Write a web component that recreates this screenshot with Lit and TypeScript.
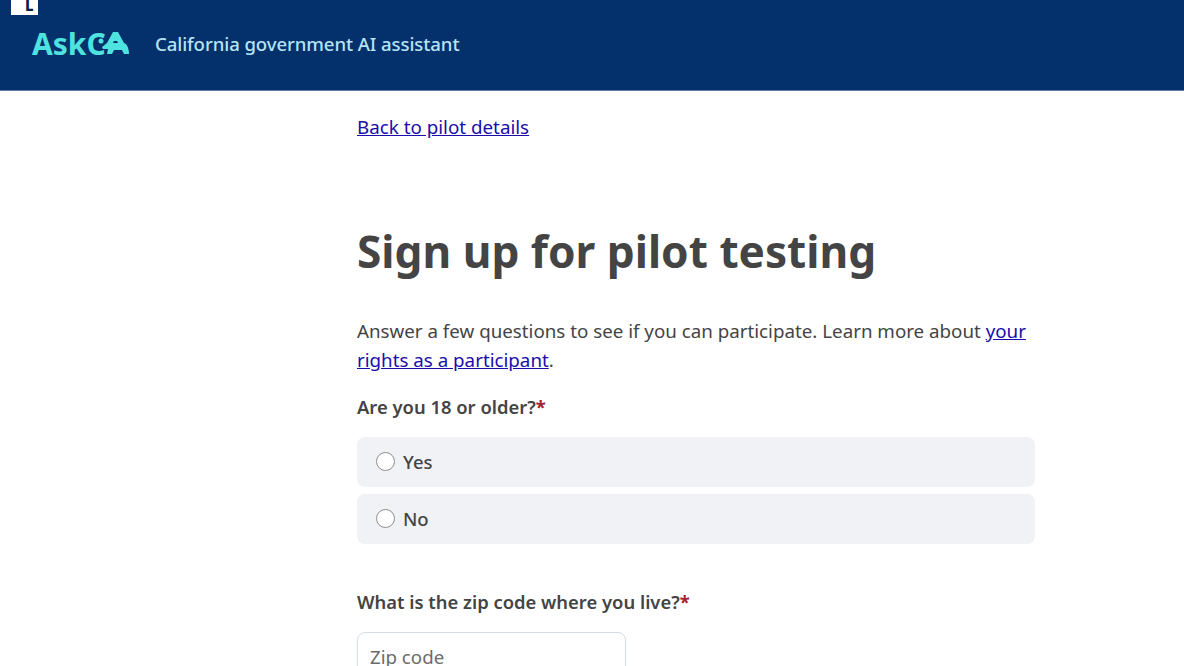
import { LitElement, html, css } from "lit";
import { customElement } from "lit/decorators.js";

@customElement("app-root")
export class AppRoot extends LitElement {
  static styles = css`
    :host {
      display: block;
      height: 666px;
      overflow: hidden;
      background: #fff;
      color: #444444;
      font-family: "Noto Sans", sans-serif;
      font-size: 18px;
    }

    header {
      position: relative;
      height: 91px;
      box-sizing: border-box;
      background: #04306b;
      border-bottom: 1px solid #5f7da6;
      display: flex;
      align-items: center;
      padding: 0 0 3px 32px;
    }

    .skip {
      position: absolute;
      top: 0;
      left: 11px;
      width: 27px;
      height: 15px;
      box-sizing: border-box;
      padding-left: 14px;
      background: #fff;
      color: #04204a;
      font-size: 15px;
      font-weight: 800;
      line-height: 10px;
    }

    .logo {
      display: flex;
      align-items: center;
      width: 97px;
      margin-right: 26px;
      color: #4fe3e0;
      font-size: 30px;
      font-weight: 700;
      line-height: 32px;
    }

    .logo svg {
      display: block;
      flex: none;
      margin-left: -4px;
      margin-top: -1px;
      overflow: visible;
    }

    .tagline {
      color: #b5e4f5;
      font-size: 18.6px;
      font-weight: 500;
      letter-spacing: -0.1px;
    }

    main {
      width: 678px;
      margin-left: 357px;
      padding-top: 22px;
    }

    a {
      color: #1a0dab;
      text-decoration: underline;
    }

    .back {
      display: block;
      font-size: 18.8px;
      line-height: 28px;
    }

    h1 {
      margin: 82px 0 0;
      font-size: 44.2px;
      font-weight: 700;
      line-height: 56px;
    }

    .intro {
      margin: 37px 0 0;
      font-size: 18.75px;
      line-height: 29px;
    }

    .label {
      font-size: 18.4px;
      font-weight: 600;
      line-height: 26px;
    }

    .label span {
      color: #a3222f;
      font-weight: 700;
    }

    .age {
      margin-top: 20px;
    }

    .options {
      display: flex;
      flex-direction: column;
      gap: 7px;
      margin-top: 17px;
    }

    .option {
      display: flex;
      align-items: center;
      gap: 8px;
      height: 50px;
      box-sizing: border-box;
      padding: 0 0 2px 19px;
      background: #f1f2f6;
      border-radius: 8px;
      font-size: 18.5px;
      font-weight: 500;
    }

    .radio {
      width: 17px;
      height: 17px;
      background: #fff;
      border: 1px solid #8d8d8d;
      border-radius: 50%;
    }

    .zip {
      margin-top: 45px;
    }

    .field {
      width: 269px;
      height: 60px;
      box-sizing: border-box;
      margin-top: 17px;
      padding: 12px;
      border: 1px solid #d6dde6;
      border-radius: 8px;
      color: #6b6b6b;
      font-size: 18.7px;
      line-height: 24px;
    }
  `;

  protected render() {
    return html`
      <header>
        <div class="skip">L</div>
        <div class="logo">
          AskC
          <svg width="27" height="22" viewBox="0 0 27 22" fill="#4fe3e0">
            <circle cx="-1" cy="9" r="2.5" />
            <path
              d="M11 0 L16 0 L22 11 C25 12 27 16 27 22 L22 22 L20 18 L12 18 L10 22 L5 22 L6 17 L1 17 L0 15 L5 11 Z"
            />
            <path d="M12 9 L15 9 L16 11 L11 11 Z" fill="#04306b" />
          </svg>
        </div>
        <div class="tagline">California government AI assistant</div>
      </header>
      <main>
        <a class="back" href="#">Back to pilot details</a>
        <h1>Sign up for pilot testing</h1>
        <p class="intro">
          Answer a few questions to see if you can participate. Learn more about
          <a href="#">your rights as a participant</a>.
        </p>
        <div class="label age">Are you 18 or older?<span>*</span></div>
        <div class="options">
          <div class="option"><div class="radio"></div>Yes</div>
          <div class="option"><div class="radio"></div>No</div>
        </div>
        <div class="label zip">What is the zip code where you live?<span>*</span></div>
        <div class="field">Zip code</div>
      </main>
    `;
  }
}
